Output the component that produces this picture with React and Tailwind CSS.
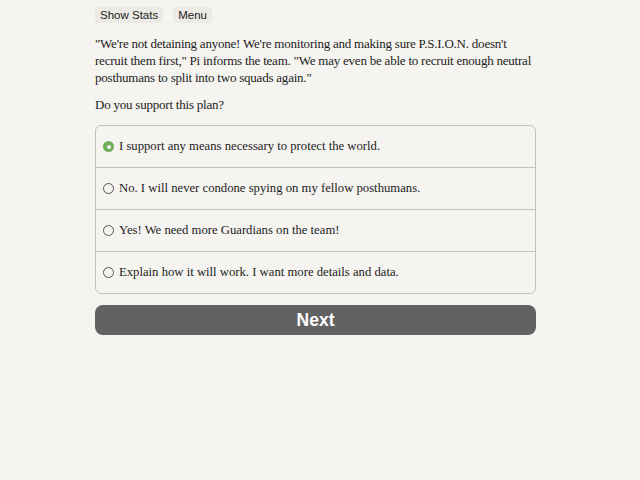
import { useState } from "react";

const choices = [
  "I support any means necessary to protect the world.",
  "No. I will never condone spying on my fellow posthumans.",
  "Yes! We need more Guardians on the team!",
  "Explain how it will work. I want more details and data.",
];

export default function App() {
  const [picked, setPicked] = useState(0);

  return (
    <div className="min-h-screen w-full bg-[#f5f4f0] text-[#1c1c1c]">
      <div className="ml-[95px] w-[441px] pt-[7px]">
        <div className="flex gap-[10px] font-['Liberation_Sans',sans-serif] text-[11.5px] leading-[16px]">
          <button className="rounded-[3px] bg-[#ebeae5] px-[5px] py-0">Show Stats</button>
          <button className="rounded-[3px] bg-[#ebeae5] px-[5px] py-0">Menu</button>
        </div>

        <div className="mt-[12px] font-['Liberation_Serif',serif] text-[13px] leading-[17px] tracking-[-0.22px]">
          <p>
            "We're not detaining anyone! We're monitoring and making sure P.S.I.O.N. doesn't recruit them first," Pi informs the team. "We may even be able to recruit enough neutral posthumans to split into two squads again."
          </p>
          <p className="mt-[10px]">Do you support this plan?</p>
        </div>

        <div className="mt-[12px] overflow-hidden rounded-[6px] border border-[#c2c1bc] font-['Liberation_Serif',serif] text-[12.7px]">
          {choices.map((c, i) => (
            <label
              key={c}
              onClick={() => setPicked(i)}
              className={
                "flex h-[41px] items-center gap-[5px] pl-[7px] " +
                (i > 0 ? "h-[42px] border-t border-[#c2c1bc]" : "")
              }
            >
              {picked === i ? (
                <span className="flex h-[11px] w-[11px] items-center justify-center rounded-full bg-[#6eaf5a]">
                  <span className="h-[4px] w-[4px] rounded-full bg-[#f5f4f0]" />
                </span>
              ) : (
                <span className="h-[11px] w-[11px] rounded-full border border-[#555]" />
              )}
              <span>{c}</span>
            </label>
          ))}
        </div>

        <button className="mt-[11px] flex h-[30px] w-full items-center justify-center rounded-[8px] bg-[#626262] font-['Liberation_Sans',sans-serif] text-[17.5px] font-bold text-white">
          Next
        </button>
      </div>
    </div>
  );
}
